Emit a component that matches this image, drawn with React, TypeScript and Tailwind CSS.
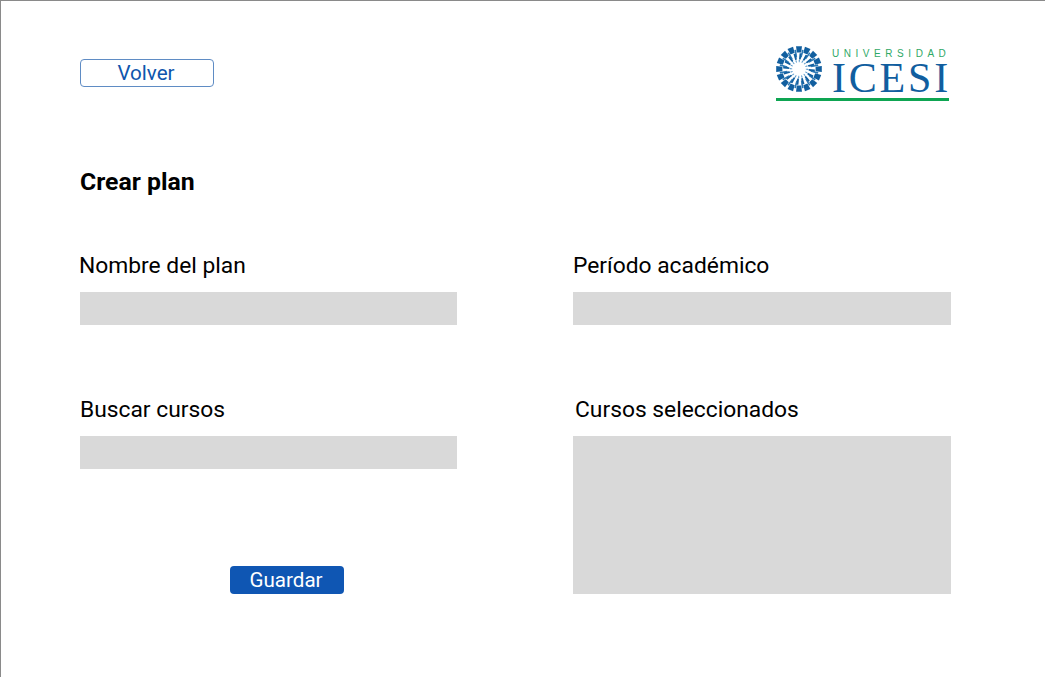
const FONT = "font-['Roboto',sans-serif]";

const SPOKES = Array.from({ length: 16 }, (_, i) => (i * 360) / 16);

function Emblem() {
  return (
    <svg width="46" height="46" viewBox="-23 -23 46 46" className="shrink-0">
      {SPOKES.map((a) => (
        <g key={a} transform={`rotate(${a})`}>
          <path d="M-3 -22.8 L3 -22.8 L2.2 -16.6 L-2.2 -16.6 Z" fill="#125f9f" />
          <path d="M0.6 -15.8 L3.4 -15.8 L1.6 -9.6 L0 -9.6 Z" fill="#125f9f" />
          <path d="M-0.3 -9 L1 -9 L0.6 -6.8 L-0.2 -6.8 Z" fill="#5c9bcb" />
        </g>
      ))}
      {SPOKES.map((a) => (
        <g key={`b${a}`} transform={`rotate(${a + 11.25})`}>
          <path d="M-0.9 -19.5 L0.9 -19.5 L0.5 -12 L-0.5 -12 Z" fill="#2a77b4" />
        </g>
      ))}
    </svg>
  );
}

function Logo() {
  return (
    <div className="w-[173px]">
      <div className="flex h-[46px] items-center">
        <Emblem />
        <div className="ml-[10px] flex h-[46px] min-w-0 flex-col">
          <span className="whitespace-nowrap pt-[3px] font-['Liberation_Sans',sans-serif] text-[10px] leading-[10px] tracking-[4.55px] text-[#2fa866]">
            UNIVERSIDAD
          </span>
          <span className="mt-[2px] whitespace-nowrap font-['Liberation_Serif',serif] text-[42px] leading-[35px] tracking-[2.8px] text-[#115e9f]">
            ICESI
          </span>
        </div>
      </div>
      <div className="mt-[6px] h-[3px] bg-[#0ea552]" />
    </div>
  );
}

function Label({ text }: { text: string }) {
  return <p className="pt-px text-[22.8px] leading-[25px] text-black">{text}</p>;
}

export default function App() {
  return (
    <div className={`h-[677px] w-[1045px] overflow-hidden border-l border-t border-[#8a8a8a] bg-white pl-[79px] pr-[94px] pt-[45px] ${FONT}`}>
      <div className="flex items-start justify-between pr-[2px]">
        <button
          type="button"
          className="mt-[13px] h-[28px] w-[134px] rounded-[4px] border border-[#5f8cc4] pr-[2px] text-[20.6px] leading-[26px] text-[#0f56ad]"
        >
          Volver
        </button>
        <Logo />
      </div>

      <h1 className="mt-[67px] text-[24.8px] font-bold leading-[28px] text-black">Crear plan</h1>

      <div className="mt-[56px] grid grid-cols-[377px_378px] gap-x-[116px]">
        <div className="flex flex-col">
          <div className="-ml-px">
            <Label text="Nombre del plan" />
          </div>
          <div className="mt-[14px] h-[33px] bg-[#d9d9d9]" />
          <div className="mt-[71px]">
            <Label text="Buscar cursos" />
          </div>
          <div className="mt-[14px] h-[33px] bg-[#d9d9d9]" />
          <button
            type="button"
            className="mt-[97px] ml-[150px] h-[28px] w-[114px] rounded-[4px] bg-[#0f56b3] pr-[2px] text-[20.6px] leading-[26px] text-white"
          >
            Guardar
          </button>
        </div>
        <div className="flex flex-col">
          <div>
            <Label text="Período académico" />
          </div>
          <div className="mt-[14px] h-[33px] bg-[#d9d9d9]" />
          <div className="ml-[2px] mt-[71px]">
            <Label text="Cursos seleccionados" />
          </div>
          <div className="mt-[14px] h-[158px] bg-[#d9d9d9]" />
        </div>
      </div>
    </div>
  );
}
